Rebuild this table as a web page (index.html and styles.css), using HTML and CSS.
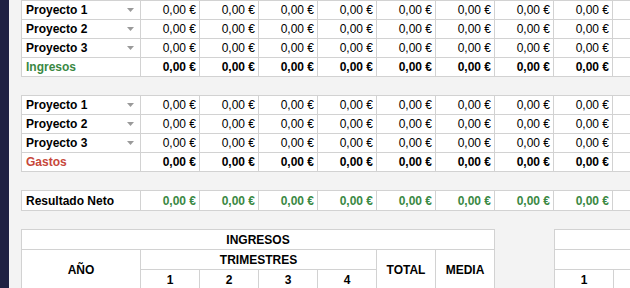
FILE: index.html
```html
<!DOCTYPE html>
<html lang="es">
<head>
<meta charset="utf-8">
<title>Presupuesto</title>
<link rel="stylesheet" href="styles.css">
</head>
<body>
<div class="app">
  <aside class="rail"></aside>
  <main class="sheet">
    <table class="grid">
      <colgroup><col class="c-label"><col class="c-val" span="8"><col class="c-rest"></colgroup>
      <tbody>
        <tr><td class="label"><span class="pick">Proyecto 1<svg class="caret" viewBox="0 0 7 4" width="7" height="4"><polygon points="0,0 7,0 3.5,4"/></svg></span></td><td>0,00 €</td><td>0,00 €</td><td>0,00 €</td><td>0,00 €</td><td>0,00 €</td><td>0,00 €</td><td>0,00 €</td><td>0,00 €</td><td></td></tr>
        <tr><td class="label"><span class="pick">Proyecto 2<svg class="caret" viewBox="0 0 7 4" width="7" height="4"><polygon points="0,0 7,0 3.5,4"/></svg></span></td><td>0,00 €</td><td>0,00 €</td><td>0,00 €</td><td>0,00 €</td><td>0,00 €</td><td>0,00 €</td><td>0,00 €</td><td>0,00 €</td><td></td></tr>
        <tr><td class="label"><span class="pick">Proyecto 3<svg class="caret" viewBox="0 0 7 4" width="7" height="4"><polygon points="0,0 7,0 3.5,4"/></svg></span></td><td>0,00 €</td><td>0,00 €</td><td>0,00 €</td><td>0,00 €</td><td>0,00 €</td><td>0,00 €</td><td>0,00 €</td><td>0,00 €</td><td></td></tr>
        <tr class="total"><td class="label income">Ingresos</td><td>0,00 €</td><td>0,00 €</td><td>0,00 €</td><td>0,00 €</td><td>0,00 €</td><td>0,00 €</td><td>0,00 €</td><td>0,00 €</td><td></td></tr>
      </tbody>
    </table>

    <table class="grid">
      <colgroup><col class="c-label"><col class="c-val" span="8"><col class="c-rest"></colgroup>
      <tbody>
        <tr><td class="label"><span class="pick">Proyecto 1<svg class="caret" viewBox="0 0 7 4" width="7" height="4"><polygon points="0,0 7,0 3.5,4"/></svg></span></td><td>0,00 €</td><td>0,00 €</td><td>0,00 €</td><td>0,00 €</td><td>0,00 €</td><td>0,00 €</td><td>0,00 €</td><td>0,00 €</td><td></td></tr>
        <tr><td class="label"><span class="pick">Proyecto 2<svg class="caret" viewBox="0 0 7 4" width="7" height="4"><polygon points="0,0 7,0 3.5,4"/></svg></span></td><td>0,00 €</td><td>0,00 €</td><td>0,00 €</td><td>0,00 €</td><td>0,00 €</td><td>0,00 €</td><td>0,00 €</td><td>0,00 €</td><td></td></tr>
        <tr><td class="label"><span class="pick">Proyecto 3<svg class="caret" viewBox="0 0 7 4" width="7" height="4"><polygon points="0,0 7,0 3.5,4"/></svg></span></td><td>0,00 €</td><td>0,00 €</td><td>0,00 €</td><td>0,00 €</td><td>0,00 €</td><td>0,00 €</td><td>0,00 €</td><td>0,00 €</td><td></td></tr>
        <tr class="total"><td class="label expense">Gastos</td><td>0,00 €</td><td>0,00 €</td><td>0,00 €</td><td>0,00 €</td><td>0,00 €</td><td>0,00 €</td><td>0,00 €</td><td>0,00 €</td><td></td></tr>
      </tbody>
    </table>

    <table class="grid net">
      <colgroup><col class="c-label"><col class="c-val" span="8"><col class="c-rest"></colgroup>
      <tbody>
        <tr class="total"><td class="label">Resultado Neto</td><td class="pos">0,00 €</td><td class="pos">0,00 €</td><td class="pos">0,00 €</td><td class="pos">0,00 €</td><td class="pos">0,00 €</td><td class="pos">0,00 €</td><td class="pos">0,00 €</td><td class="pos">0,00 €</td><td></td></tr>
      </tbody>
    </table>

    <div class="summary">
      <table class="head-table">
        <colgroup><col class="c-label"><col class="c-val" span="6"></colgroup>
        <thead>
          <tr><th colspan="7">INGRESOS</th></tr>
          <tr><th rowspan="2">AÑO</th><th colspan="4">TRIMESTRES</th><th rowspan="2">TOTAL</th><th rowspan="2">MEDIA</th></tr>
          <tr><th>1</th><th>2</th><th>3</th><th>4</th></tr>
        </thead>
      </table>
      <table class="head-table right">
        <colgroup><col class="c-val" span="4"></colgroup>
        <thead>
          <tr><th colspan="4"></th></tr>
          <tr><th colspan="4"></th></tr>
          <tr><th>1</th><th></th><th></th><th></th></tr>
        </thead>
      </table>
    </div>
  </main>
</div>
</body>
</html>
```

FILE: styles.css
```css
html, body {
  margin: 0;
  height: 100%;
  overflow: hidden;
}
body {
  background: #f3f3f3;
  font-family: "Liberation Sans", Arial, sans-serif;
  font-size: 12px;
  color: #000;
}
.app {
  display: flex;
  height: 288px;
}
.rail {
  flex: none;
  width: 9px;
  background: #1f2142;
}
.sheet {
  flex: 1;
  min-width: 0;
  padding-left: 12px;
  display: flex;
  flex-direction: column;
  align-items: flex-start;
  gap: 18px;
  overflow: hidden;
}
table {
  border-collapse: collapse;
  table-layout: fixed;
  background: #fff;
  flex: none;
}
.c-label { width: 119px; }
.c-val { width: 59px; }
.c-rest { width: 60px; }
.grid { width: 651px; }
.grid td {
  border: 1px solid #d2d2d2;
  height: 18px;
  padding: 0 3px 0 4px;
  text-align: right;
  white-space: nowrap;
  line-height: 14px;
}
.grid td.label {
  text-align: left;
  font-weight: bold;
}
.pick {
  display: flex;
  align-items: center;
  justify-content: space-between;
  padding-right: 3px;
}
.caret {
  fill: #9a9a9a;
  display: block;
}
.total td { font-weight: bold; }
.income { color: #3a8843; }
.expense { color: #c7473a; }
.pos { color: #3a8843; }
.net td { height: 19px; }

.summary {
  display: flex;
  gap: 59px;
  flex: none;
}
.head-table { width: 473px; }
.head-table.right { width: 236px; }
.head-table th {
  border: 1px solid #d2d2d2;
  height: 19px;
  padding: 0;
  font-weight: bold;
  text-align: center;
  line-height: 14px;
}
```
